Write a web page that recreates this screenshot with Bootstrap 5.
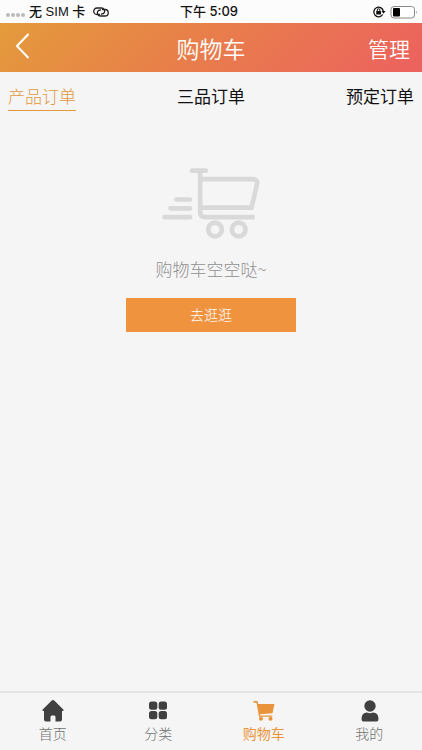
<!DOCTYPE html>
<html lang="zh-CN">
<head>
<meta charset="utf-8">
<meta name="viewport" content="width=device-width, initial-scale=1">
<title>购物车</title>
<link href="https://cdn.jsdelivr.net/npm/bootstrap@5.3.0/dist/css/bootstrap.min.css" rel="stylesheet">
<style>
body{font-family:"Liberation Sans","Noto Sans CJK SC",sans-serif;background:#f5f5f5;color:#111}
svg{display:block;flex:none}
.status-bar{height:23px;font:500 13px/23px "Liberation Sans","Noto Sans CJK SC",sans-serif;background:#fcfcfc;color:#111}
.clock{font-family:Inter,"Noto Sans CJK SC",sans-serif}
.signal{gap:1px;padding:7px 4px 0 6px}
.signal i{width:4px;height:4px;border-radius:50%;background:#bbb}
.title-bar{height:49px;background:linear-gradient(135deg,#e49b3b,#e87f4a 45%,#ec615f);color:#fff}
.title-bar h1,.title-bar .btn{font-size:21px;line-height:32px;font-weight:350;font-family:"Noto Sans CJK SC",sans-serif}
.title-bar h1{font-size:23px}
.side{flex:1 1 0}
.order-tabs{padding:14px 8px 0}
.order-tabs a{font-size:17px;line-height:24px;color:#111;border-bottom:1px solid transparent}
.order-tabs a.active{color:#e0993f;border-color:#e0993f;font-weight:300}
.empty-state{padding-top:57px}
.empty-text{font-size:17px;line-height:24px;margin-top:18px;margin-bottom:17px;color:#909090;font-weight:300;font-family:"Noto Sans CJK SC",sans-serif}
.shop-btn{width:170px;height:34px;font-size:14px;line-height:20px;background:#f0933e;color:#fff;font-weight:300}
.shop-btn:hover{background:#e58832;color:#fff}
.tab-bar{height:59px;border-top:2px solid #e6e6e6;padding-top:7px}
.tab-bar a{font-size:14px;line-height:20px;color:#707070;gap:2px;font-weight:300}
.tab-bar a svg{color:#404040}
.tab-bar a.active{font-weight:400}
.tab-bar a.active,.tab-bar a.active svg{color:#e9943c}
</style>
<script src="https://cdn.jsdelivr.net/npm/bootstrap@5.3.0/dist/js/bootstrap.bundle.min.js"></script>
</head>
<body class="min-vh-100 d-flex flex-column">
<div class="status-bar d-flex align-items-center">
  <div class="side d-flex align-items-center">
    <span class="signal d-flex"><i></i><i></i><i></i><i></i></span>
    <span class="text-nowrap">无 SIM 卡</span>
    <svg class="ms-2" width="16" height="10" viewBox="0 0 16 10" fill="none" stroke="#222" stroke-width="1.300" stroke-linecap="round"><path d="M6.500 7.500H4A3.200 3.200 0 0 1 4 1h4.500a3.200 3.200 0 0 1 2.800 4.700q-.8 1.300-2.800 1.300"/><path d="M9.500 2.500H12A3.200 3.200 0 0 1 12 9H7.500a3.200 3.200 0 0 1-2.800-4.700Q5.500 3 7.500 3"/></svg>
  </div>
  <span class="clock">下午 5:09</span>
  <div class="side d-flex align-items-center justify-content-end pe-1">
    <svg class="me-1" width="14" height="14" viewBox="0 0 14 14"><path d="M10.700 9.500A4.800 4.800 0 1 1 11.300 6" fill="none" stroke="#111" stroke-width="1.300"/><path d="M9.500 6h4l-2 2.800z" fill="#111"/><rect x="4.200" y="6" width="4.800" height="3.500" rx=".5" fill="#111"/><path d="M5.300 6V5a1.300 1.300 0 0 1 2.600 0v1" fill="none" stroke="#111"/></svg>
    <svg width="28" height="14" viewBox="0 0 28 14"><rect x="1" y="1.500" width="23.500" height="11.500" rx="3" fill="#fff" stroke="#888"/><rect x="3" y="3" width="7" height="8.500" rx="1" fill="#000"/><path d="M26 5.500q1.500 1.700 0 3.500z" fill="#888"/></svg>
  </div>
</div>
<header class="title-bar d-flex align-items-center">
  <div class="side"><button class="btn border-0 p-0 ps-3 text-white" aria-label="返回"><svg class="mb-1" width="14" height="26" viewBox="0 0 14 26" fill="none" stroke="#fff" stroke-width="2"><path d="M12.500 1 1 13l11.500 12"/></svg></button></div>
  <h1 class="m-0">购物车</h1>
  <div class="side text-end"><button class="btn border-0 p-0 pe-2 me-1 text-white">管理</button></div>
</header>
<nav class="order-tabs d-flex justify-content-between" aria-label="订单类型">
  <a class="active text-decoration-none" href="#" aria-current="page">产品订单</a>
  <a class="text-decoration-none" href="#">三品订单</a>
  <a class="text-decoration-none" href="#">预定订单</a>
</nav>
<main class="empty-state flex-grow-1 d-flex flex-column align-items-center">
  <svg width="98" height="71" viewBox="0 0 98 71" fill="none" stroke="#d9d9d9" stroke-width="4.700" aria-hidden="true">
    <path stroke-linecap="round" d="M30 2.700h14M14.500 31.500h13.500M8.500 40.300H28M2.500 49.200H28"/>
    <path d="M38.200 3v41q0 5.200 5.200 5.200h49.300M38.200 11.200h52q6 0 4.800 5l-5.500 23.500h-51"/>
    <circle cx="53" cy="61.500" r="6.800"/><circle cx="76.700" cy="61.500" r="6.800"/>
  </svg>
  <p class="empty-text">购物车空空哒~</p>
  <button class="shop-btn btn border-0 rounded-0 p-0">去逛逛</button>
</main>
<footer>
<nav class="tab-bar d-flex" aria-label="主导航">
  <a class="col d-flex flex-column align-items-center text-decoration-none" href="#"><svg width="22" height="22" viewBox="0 0 22 22" fill="currentColor"><path d="M11 0q.7 0 1.300.6l9 8.800q1 1.400-.8 1.600H20v8.500q0 2-2 2h-4.500V17q0-1.500-1.300-1.500H9.800Q8.500 15.500 8.500 17v4.500H4q-2 0-2-2V11h-.5Q-.3 10.800.7 9.400l9-8.800Q10.300 0 11 0z"/></svg>首页</a>
  <a class="col d-flex flex-column align-items-center text-decoration-none" href="#"><svg width="22" height="22" viewBox="0 0 22 22" fill="currentColor"><rect x="2" y="1.500" width="8.300" height="8.300" rx="2.500"/><rect x="11.700" y="1.500" width="8.300" height="8.300" rx="2.500"/><rect x="2" y="11" width="8.300" height="8.300" rx="2.500"/><rect x="11.700" y="11" width="8.300" height="8.300" rx="2.500"/></svg>分类</a>
  <a class="active col d-flex flex-column align-items-center text-decoration-none" href="#" aria-current="page"><svg width="22" height="22" viewBox="0 0 22 22" fill="currentColor"><path d="M.5 1h4l.8 3H21.500l-2 9.300-12.500 1 .3 1.200h12v1.300H6L3.500 2.700h-3z"/><circle cx="8" cy="18.800" r="2"/><circle cx="17.500" cy="18.800" r="2"/></svg>购物车</a>
  <a class="col d-flex flex-column align-items-center text-decoration-none" href="#"><svg width="22" height="22" viewBox="0 0 22 22" fill="currentColor"><circle cx="12" cy="6" r="5.700"/><path d="M3.500 19q0-6.500 5.500-6.500 3 1.400 6 0 5.500 0 5.500 6.500 0 2.500-2 2.500h-13q-2 0-2-2.500z"/></svg>我的</a>
</nav>
</footer>
</body>
</html>
